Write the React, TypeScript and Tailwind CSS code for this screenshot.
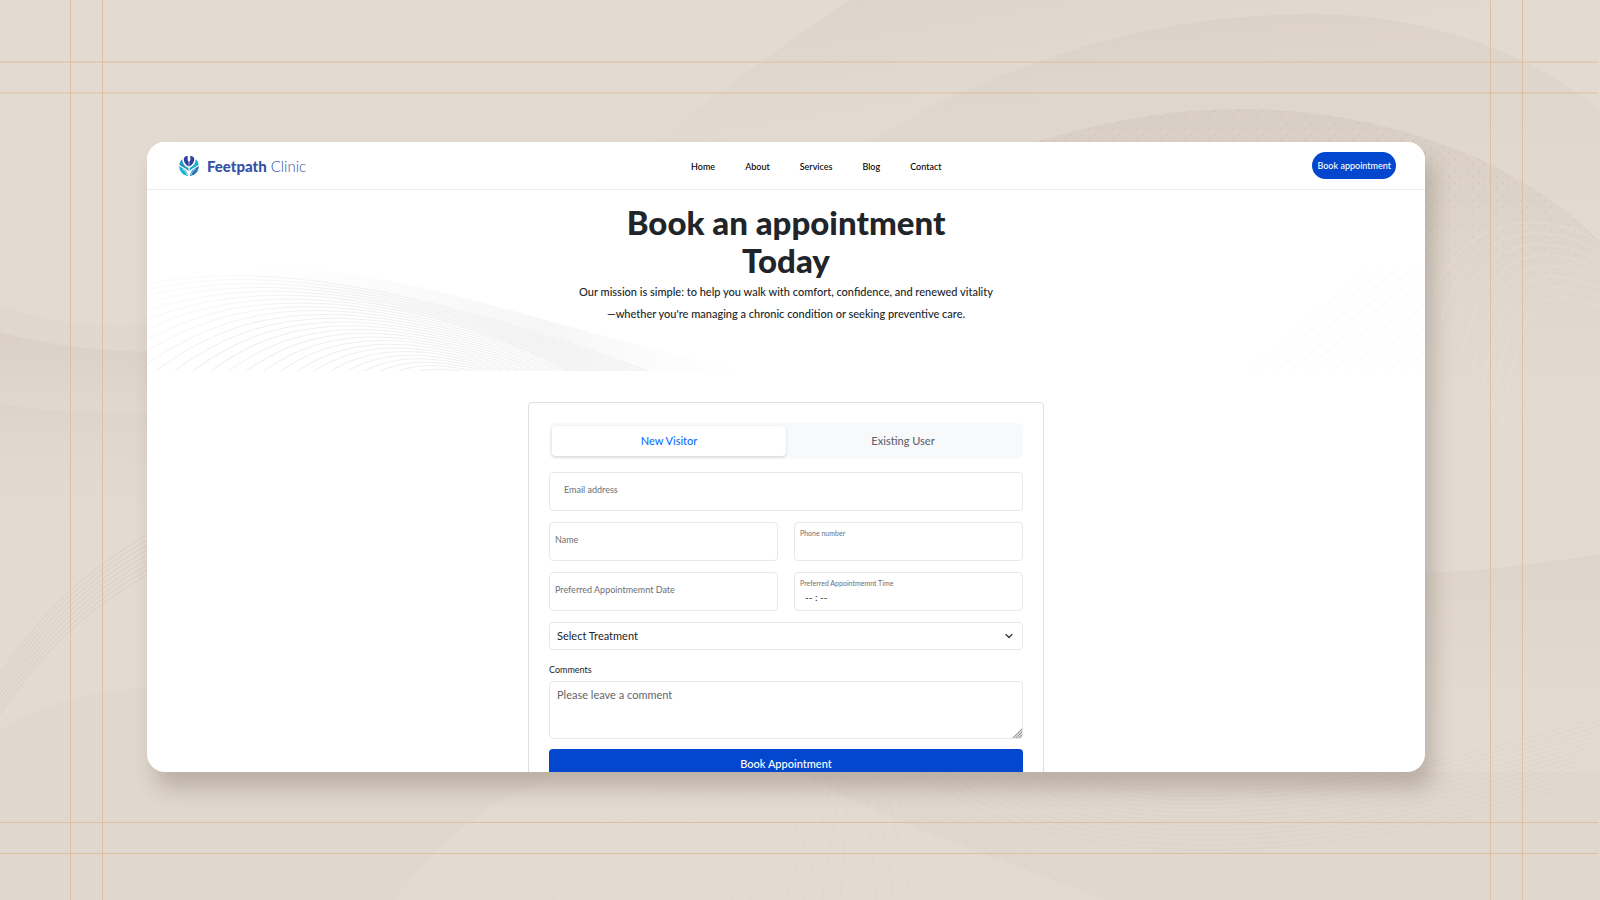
import { useState } from "react";
import { ChevronDown } from "lucide-react";

const navLinks = ["Home", "About", "Services", "Blog", "Contact"];

const treatments = ["Foot Assessment", "Nail Care", "Custom Orthotics"];

const waveLines = Array.from({ length: 34 }, (_, i) => i);

function Backdrop() {
  return (
    <svg
      className="pointer-events-none absolute inset-0 h-full w-full"
      viewBox="0 0 1600 900"
      preserveAspectRatio="none"
      aria-hidden="true"
    >
      <defs>
        <linearGradient id="fold" x1="0" y1="0" x2="0.6" y2="0.6">
          <stop offset="0" stopColor="#cfc5bb" stopOpacity="0.5" />
          <stop offset="1" stopColor="#cfc5bb" stopOpacity="0" />
        </linearGradient>
        <linearGradient id="foldDown" x1="0" y1="0" x2="0" y2="1">
          <stop offset="0" stopColor="#cabfb4" stopOpacity="0.36" />
          <stop offset="1" stopColor="#cabfb4" stopOpacity="0" />
        </linearGradient>
        <pattern id="dots" width="12" height="12" patternUnits="userSpaceOnUse">
          <circle cx="3" cy="3" r="1.2" fill="#cdc1b6" />
          <circle cx="9" cy="9" r="1.2" fill="#cdc1b6" />
        </pattern>
        <linearGradient id="dotFade" x1="0" y1="0" x2="0" y2="1">
          <stop offset="0.3" stopColor="#fff" />
          <stop offset="1" stopColor="#000" />
        </linearGradient>
        <mask id="dotMask">
          <rect x="1000" y="100" width="600" height="220" fill="url(#dotFade)" />
        </mask>
      </defs>

      <path d="M655 142C720 90 790 40 850 0H1500L1300 142Z" fill="url(#fold)" opacity="0.7" />
      <path d="M866 142C1010 60 1150 14 1310 14C1440 14 1540 60 1600 110V240H866Z" fill="url(#foldDown)" opacity="0.65" />
      <path d="M1035 142C1130 114 1190 109 1250 109C1390 112 1520 160 1600 242V420H1035Z" fill="url(#foldDown)" opacity="0.9" />
      <path
        d="M1035 142C1130 114 1190 109 1250 109C1390 112 1520 160 1600 242L1520 310H1035Z"
        fill="url(#dots)"
        mask="url(#dotMask)"
        opacity="0.5"
      />
      <path d="M0 305C50 325 100 326 160 325V420H0Z" fill="url(#foldDown)" opacity="0.4" />
      <path d="M0 332C50 346 100 351 160 352V440H0Z" fill="url(#foldDown)" opacity="0.8" />
      <path d="M0 404C50 412 100 413 160 413V520H0Z" fill="url(#foldDown)" opacity="0.5" />
      <path d="M1400 574C1480 572 1550 562 1600 554V720H1400Z" fill="url(#foldDown)" opacity="0.6" />
      <path d="M0 900V730C50 700 100 690 160 686V772H560C480 805 430 850 395 900Z" fill="#d9cfc5" opacity="0.3" />
      <path d="M800 772C900 830 1010 860 1105 900H1600V772Z" fill="#d9cfc5" opacity="0.25" />

      <g fill="none" stroke="#cfc4b9" strokeOpacity="0.5">
        {waveLines.slice(0, 9).map((i) => (
          <path key={i} d={`M0 ${674 + i * 5}C50 ${600 + i * 5} 100 ${560 + i * 5} 160 ${528 + i * 5}`} />
        ))}
      </g>
      <g fill="none" stroke="#ece4dc" strokeOpacity="0.45">
        {waveLines.slice(0, 8).map((i) => (
          <path
            key={i}
            d={`M${1432 + i * 10} ${300 + i * 18}C${1460 + i * 9} ${216 + i * 10} 1540 ${205 + i * 12} 1600 ${243 + i * 9}`}
          />
        ))}
      </g>
      <g fill="none" stroke="#cfc4b9" strokeOpacity="0.22">
        {waveLines.slice(0, 14).map((i) => (
          <path
            key={i}
            d={`M${920 + i * 14} 772C${1050 + i * 6} ${880 - i * 5} ${1330 + i * 5} ${865 - i * 6} ${1560 + i * 4} ${790 - i * 6}`}
          />
        ))}
      </g>
      <g stroke="#cfc4b9" strokeOpacity="0.12">
        {waveLines.map((i) => (
          <line key={i} x1={690 + i * 8} y1="772" x2={480 + i * 18} y2="900" />
        ))}
      </g>

      <g stroke="#dcb88f" strokeOpacity="0.75">
        <path d="M70.5 0V900M102.5 0V900M1490.5 0V900M1522.5 0V900" />
        <path d="M0 62H1598M0 93H1598M0 822.5H1598M0 853.5H1598" />
      </g>
    </svg>
  );
}

function HeroWaves() {
  return (
    <svg
      className="pointer-events-none absolute inset-0 h-full w-full"
      viewBox="0 0 1277 181"
      preserveAspectRatio="none"
      aria-hidden="true"
    >
      <defs>
        <linearGradient id="waveFade" gradientUnits="userSpaceOnUse" x1="0" y1="80" x2="60" y2="181">
          <stop offset="0" stopColor="#f2f2f2" stopOpacity="0.2" />
          <stop offset="1" stopColor="#efefef" />
        </linearGradient>
        <linearGradient id="mist" x1="0" x2="1">
          <stop offset="0" stopColor="#f6f6f6" stopOpacity="0" />
          <stop offset="0.6" stopColor="#f4f4f4" stopOpacity="0.8" />
          <stop offset="1" stopColor="#f8f8f8" stopOpacity="0" />
        </linearGradient>
      </defs>
      <path d="M100 78C260 74 400 140 600 181H420C340 140 250 110 100 100Z" fill="url(#mist)" />
      <g fill="none" stroke="url(#waveFade)">
        {waveLines.slice(0, 30).map((i) => (
          <path
            key={i}
            d={`M${-110 + i * 12} ${130 + i * 5}C${20 + i * 9} ${66 + i * 4} ${180 + i * 4} ${60 + i * 4} ${520 - i * 4} ${188 + i}`}
          />
        ))}
      </g>
      <g stroke="#fbfbfb">
        {waveLines.slice(0, 20).map((i) => (
          <line key={i} x1={1100 + i * 14} y1="181" x2={1220 + i * 14} y2="80" />
        ))}
      </g>
    </svg>
  );
}

function LogoMark() {
  return (
    <svg className="size-5" viewBox="0 0 20 20" aria-hidden="true">
      <path d="M9.7 10.6C6.4 9.2 4.3 5.4 4.9 2.1C5.8 .5 7.6 -.2 9 .2C8.3 1.8 8.5 4.8 9.7 5.8Z" fill="#2f3f9e" />
      <path d="M10.3 10.6C13.6 9.2 15.7 5.4 15.1 2.1C14.2 .5 12.4 -.2 11 .2C11.7 1.8 11.5 4.8 10.3 5.8Z" fill="#2f3f9e" />
      <path d="M3.4 3.2C3.4 7.6 5.6 10.3 9.4 11.7V15.2C7.5 11.8 2.5 11.2 .4 8.4C.6 6.3 1.7 4.4 3.4 3.2Z" fill="#2497bd" />
      <path d="M16.6 3.2C16.6 7.6 14.4 10.3 10.6 11.7V15.2C12.5 11.8 17.5 11.2 19.6 8.4C19.4 6.3 18.3 4.4 16.6 3.2Z" fill="#1aaec8" />
      <path d="M.2 9.8C2.5 12.6 8.2 13 9.1 19.9C4 19.6 0 15.2 .2 9.8Z" fill="#14b6cf" />
      <path d="M19.8 9.8C17.5 12.6 11.8 13 10.9 19.9C16 19.6 20 15.2 19.8 9.8Z" fill="#2474b5" />
      <path d="M3 13C5.5 14 7.3 16 8 19M17 13C14.5 14 12.7 16 12 19" fill="none" stroke="#fff" strokeWidth="0.6" />
    </svg>
  );
}

function Header() {
  return (
    <header className="relative flex h-12 items-center border-b border-[#ececec] bg-white pl-8 pr-[29px]">
      <a href="#" className="flex items-center gap-2 text-[15px] leading-5 text-[#3350a8]">
        <LogoMark />
        <span>
          <strong className="font-black">Feetpath</strong> <span className="font-light">Clinic</span>
        </span>
      </a>
      <nav className="flex flex-1 justify-center gap-[30px] pl-3.5 pt-0.5 text-[9px] font-medium text-black">
        {navLinks.map((link) => (
          <a key={link} href="#">
            {link}
          </a>
        ))}
      </nav>
      <button type="button" className="h-[27px] rounded-full bg-[#0347ce] px-[5px] text-[9px] font-medium text-white">
        Book appointment
      </button>
    </header>
  );
}

interface FieldProps {
  id: string;
  label: string;
  type?: string;
  floated?: boolean;
  placeholder?: string;
  className?: string;
}

function Field({ id, label, type = "text", floated = false, placeholder, className = "px-[5px]" }: FieldProps) {
  return (
    <div className={`flex h-[39px] flex-col rounded border border-[#e6e8eb] ${className}`}>
      <label
        htmlFor={id}
        className={`text-[#6c7075] ${floated ? "pt-1 text-[7px] leading-[12px]" : "pt-2.5 text-[9px] leading-[14px]"}`}
      >
        {label}
      </label>
      <input
        id={id}
        type={type}
        placeholder={placeholder}
        className="min-h-0 w-full flex-1 bg-transparent px-[5px] pb-1 text-[10px] text-[#212529] outline-none placeholder:text-[#212529]"
      />
    </div>
  );
}

function BookingForm() {
  const [tab, setTab] = useState("New Visitor");

  return (
    <form className="mx-auto w-full max-w-[516px] rounded border border-[#dddfe2] p-5">
      <div className="flex rounded-md bg-[#f8f9fb] p-[3px]">
        {["New Visitor", "Existing User"].map((name) => (
          <button
            key={name}
            type="button"
            onClick={() => setTab(name)}
            className={`h-[30px] flex-1 rounded pt-px text-[11px] font-medium ${
              tab === name ? "bg-white text-[#0d6efd] shadow-[0_1px_3px_rgba(0,0,0,0.16)]" : "text-[#5f666d]"
            }`}
          >
            {name}
          </button>
        ))}
      </div>

      <div className="mt-[13px] grid grid-cols-2 gap-x-4 gap-y-[11px]">
        <Field id="email" label="Email address" type="email" className="col-span-2 px-3.5" />
        <Field id="name" label="Name" />
        <Field id="phone" label="Phone number" type="tel" floated />
        <Field id="date" label="Preferred Appointmemnt Date" />
        <Field id="time" label="Preferred Appointmemnt Time" placeholder="-- : --" floated />
      </div>

      <div className="relative mt-[11px]">
        <select
          aria-label="Select Treatment"
          className="h-7 w-full appearance-none rounded border border-[#e6e8eb] bg-white px-[7px] text-[11px] text-[#212529]"
        >
          <option>Select Treatment</option>
          {treatments.map((treatment) => (
            <option key={treatment}>{treatment}</option>
          ))}
        </select>
        <ChevronDown className="pointer-events-none absolute right-2 top-2 size-3 text-[#343a40]" strokeWidth={2.5} />
      </div>

      <label htmlFor="comments" className="mt-3.5 block text-[9px] leading-[12px] text-[#212529]">
        Comments
      </label>
      <div className="relative mt-[5px]">
        <textarea
          id="comments"
          placeholder="Please leave a comment"
          className="block h-[58px] w-full resize-none rounded border border-[#e6e8eb] px-[7px] py-1 text-[11px] leading-[17px] placeholder:text-[#5f666d]"
        />
        <svg className="pointer-events-none absolute bottom-px right-px size-2.5" viewBox="0 0 10 10" aria-hidden="true">
          <path d="M0 10L10 0V10Z" fill="#d6d6d6" />
          <path d="M1 10L10 1M4 10L10 4M7 10L10 7" stroke="#8d8d8d" strokeWidth="0.9" />
        </svg>
      </div>
      <button type="submit" className="mt-2.5 h-[29px] w-full rounded bg-[#0347ce] text-[11px] font-medium text-white">
        Book Appointment
      </button>
    </form>
  );
}

export default function App() {
  return (
    <div className="relative h-screen overflow-hidden bg-[#e3dad1] pl-[147px] pr-[175px] pt-[142px] font-[Lato,'Open_Sans',sans-serif]">
      <Backdrop />
      <main className="relative h-[70vh] overflow-hidden rounded-[18px] bg-white shadow-[8px_16px_20px_rgba(90,75,65,0.28)]">
        <Header />
        <section className="relative h-[181px] px-4 pt-[13px] text-center">
          <HeroWaves />
          <div className="relative">
            <h1 className="text-[33px] font-black leading-[38px] text-[#212529]">
              Book an appointment
              <br />
              Today
            </h1>
            <p className="mx-auto mt-0.5 max-w-[420px] text-[11px] font-medium leading-[22px] text-[#212529]">
              Our mission is simple: to help you walk with comfort, confidence, and renewed vitality
              <br />
              —whether you're managing a chronic condition or seeking preventive care.
            </p>
          </div>
        </section>
        <div className="px-4 pt-[31px]">
          <BookingForm />
        </div>
      </main>
    </div>
  );
}
